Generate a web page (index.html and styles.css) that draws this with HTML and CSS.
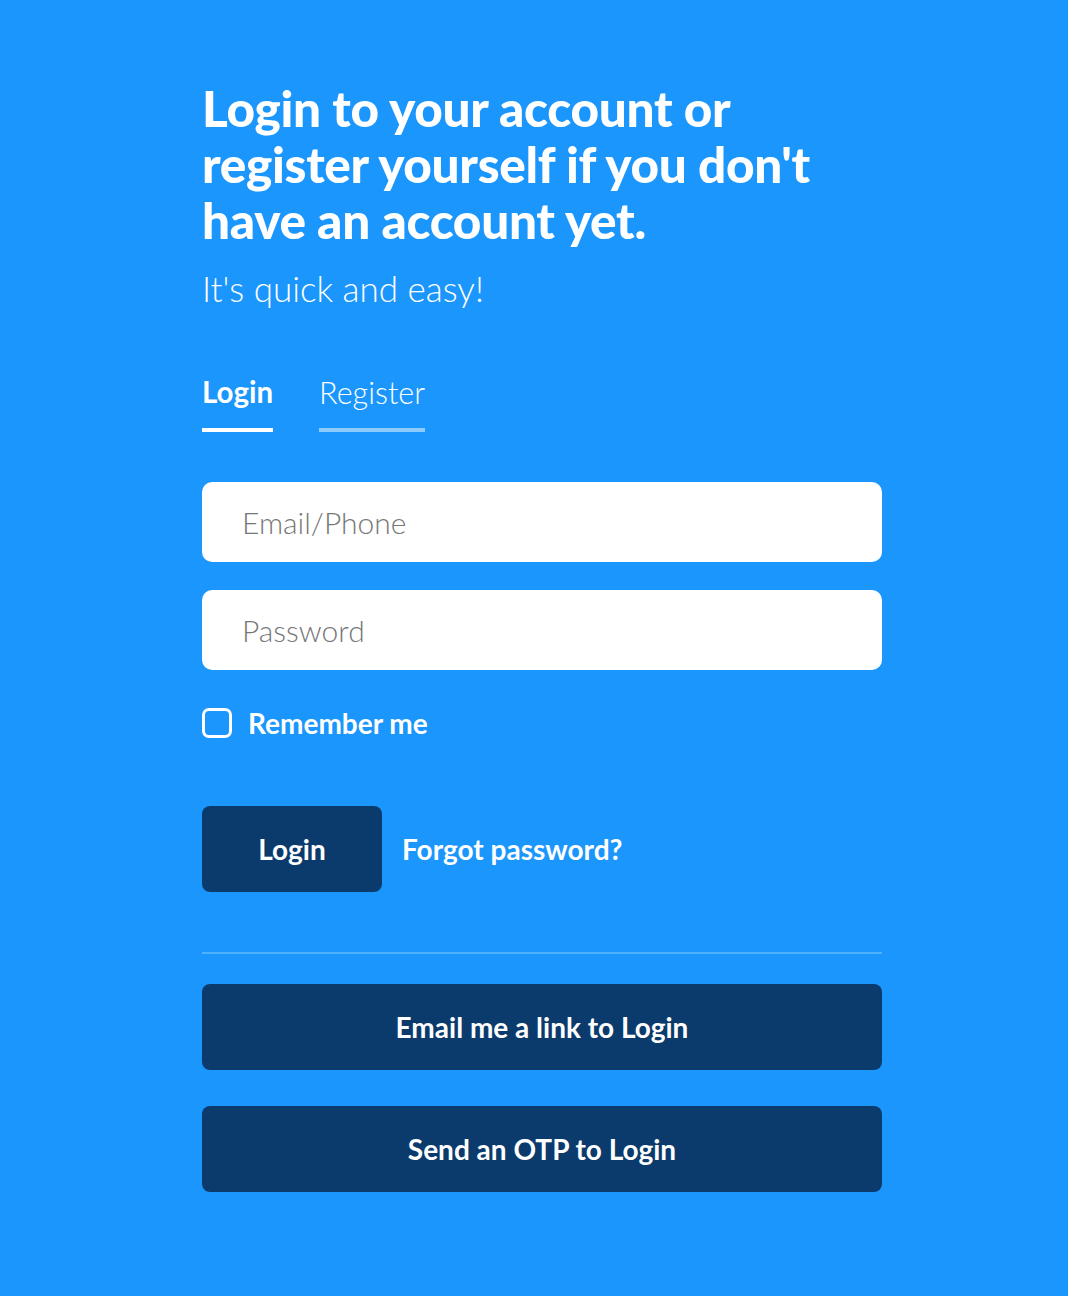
FILE: index.html
```html
<!DOCTYPE html>
<html lang="en">
<head>
<meta charset="utf-8">
<title>Login</title>
<link rel="stylesheet" href="styles.css">
</head>
<body>
<main class="page">
  <section class="panel">
    <h1 class="title">Login to your account or register yourself if you don't have an account yet.</h1>
    <p class="subtitle">It's quick and easy!</p>

    <nav class="tabs">
      <a class="tab tab-active">Login</a>
      <a class="tab">Register</a>
    </nav>

    <form class="form">
      <input class="field" type="text" placeholder="Email/Phone">
      <input class="field" type="password" placeholder="Password">
      <label class="remember">
        <span class="box"></span>
        <span>Remember me</span>
      </label>
      <div class="actions">
        <button type="button" class="btn btn-login">Login</button>
        <a class="forgot">Forgot password?</a>
      </div>
      <hr class="divider">
      <button type="button" class="btn btn-wide">Email me a link to Login</button>
      <button type="button" class="btn btn-wide">Send an OTP to Login</button>
    </form>
  </section>
</main>
</body>
</html>
```
FILE: styles.css
```css
* { box-sizing: border-box; }
html, body { margin: 0; padding: 0; }
body {
  background: #1a96fd;
  font-family: Lato, "Liberation Sans", sans-serif;
  color: #fff;
  width: 1068px;
  min-height: 1296px;
}
.page {
  display: flex;
  padding: 80px 0 0 202px;
}
.panel {
  width: 680px;
}
.title {
  margin: 0;
  font-size: 49.5px;
  font-weight: 900;
  line-height: 56px;
  letter-spacing: -0.3px;
}
.subtitle {
  margin: 18px 0 0;
  font-size: 35px;
  font-weight: 300;
  line-height: 44px;
}
.tabs {
  display: flex;
  gap: 46px;
  margin-top: 62px;
}
.tab {
  font-size: 30.5px;
  font-weight: 300;
  line-height: 40px;
  padding-bottom: 16px;
  border-bottom: 4px solid rgba(255,255,255,0.5);
}
.tab-active {
  font-size: 29.5px;
  font-weight: 700;
  border-bottom-color: #fff;
}
.form {
  display: flex;
  flex-direction: column;
  margin-top: 50px;
}
.field {
  height: 80px;
  border: 0;
  border-radius: 10px;
  background: #fff;
  padding: 0 40px;
  font-family: Lato, "Liberation Sans", sans-serif;
  font-size: 30px;
  font-weight: 300;
  color: #333;
  outline: none;
  margin-bottom: 28px;
}
.field::placeholder { color: #777; }
.remember {
  display: flex;
  align-items: center;
  gap: 16px;
  font-size: 28px;
  font-weight: 700;
  line-height: 34px;
  margin-top: 8px;
}
.box {
  width: 30px;
  height: 30px;
  border: 3px solid #fff;
  border-radius: 7px;
}
.actions {
  display: flex;
  align-items: center;
  gap: 20px;
  margin-top: 66px;
}
.btn {
  border: 0;
  border-radius: 8px;
  background: #0b3b6c;
  color: #fff;
  font-family: Lato, "Liberation Sans", sans-serif;
  font-size: 28px;
  font-weight: 700;
  height: 86px;
}
.btn-login { width: 180px; }
.forgot {
  font-size: 28px;
  font-weight: 700;
}
.divider {
  width: 100%;
  margin: 60px 0 0;
  border: 0;
  border-top: 2px solid #4fb0ff;
}
.btn-wide {
  width: 100%;
  margin-top: 30px;
}
.btn-wide + .btn-wide { margin-top: 36px; }
```
